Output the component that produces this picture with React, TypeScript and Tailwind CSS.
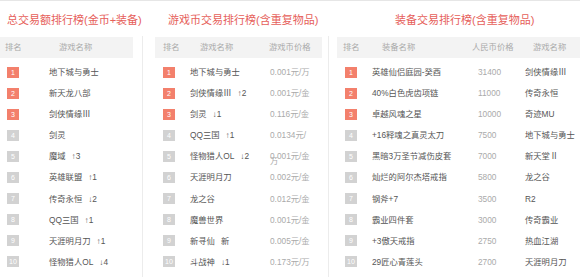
const TOTAL = [
  { name: "地下城与勇士", change: "" },
  { name: "新天龙八部", change: "" },
  { name: "剑侠情缘Ⅲ", change: "" },
  { name: "剑灵", change: "" },
  { name: "魔域", change: "↑3" },
  { name: "英雄联盟", change: "↑1" },
  { name: "传奇永恒", change: "↓2" },
  { name: "QQ三国", change: "↑1" },
  { name: "天涯明月刀", change: "↑1" },
  { name: "怪物猎人OL", change: "↓4" },
];

const COIN = [
  { name: "地下城与勇士", change: "", price: "0.001元/万" },
  { name: "剑侠情缘Ⅲ", change: "↑2", price: "0.001元/金" },
  { name: "剑灵", change: "↓1", price: "0.116元/金" },
  { name: "QQ三国", change: "↑1", price: "0.0134元/万" },
  { name: "怪物猎人OL", change: "↓2", price: "0.001元/金" },
  { name: "天涯明月刀", change: "", price: "0.002元/金" },
  { name: "龙之谷", change: "", price: "0.012元/金" },
  { name: "魔兽世界", change: "", price: "0.001元/金" },
  { name: "新寻仙", change: "新", price: "0.005元/金" },
  { name: "斗战神", change: "↓1", price: "0.173元/万" },
];

const GEAR = [
  { item: "英雄仙侣庭园-癸酉", price: "31400", game: "剑侠情缘Ⅲ" },
  { item: "40%白色虎齿项链", price: "11000", game: "传奇永恒" },
  { item: "卓越风魂之星", price: "10000", game: "奇迹MU" },
  { item: "+16释魂之真灵太刀", price: "7500", game: "地下城与勇士" },
  { item: "黑暗3万圣节减伤皮套", price: "7000", game: "新天堂Ⅱ" },
  { item: "灿烂的阿尔杰塔戒指", price: "5800", game: "龙之谷" },
  { item: "钢斧+7", price: "3500", game: "R2" },
  { item: "霸业四件套", price: "3000", game: "传奇霸业" },
  { item: "+3傲天戒指", price: "2750", game: "热血江湖" },
  { item: "29匠心青莲头", price: "2700", game: "天涯明月刀" },
];

function Rank({ n }: { n: number }) {
  return (
    <div className="flex h-[26px] items-center">
      <span
        className={`block h-[11px] w-[12px] text-center text-[7px] leading-[11px] text-white ${
          n <= 3 ? "bg-[#f3806c]" : "bg-[#d2d2d2]"
        }`}
      >
        {n}
      </span>
    </div>
  );
}

function Name({ name, change }: { name: string; change: string }) {
  return (
    <span className="whitespace-nowrap">
      {name}
      {change && <span className="ml-[6px]">{change}</span>}
    </span>
  );
}

function Title({ text, pad }: { text: string; pad: string }) {
  return (
    <div className={`h-[35px] whitespace-nowrap pt-[11px] text-[11px] leading-[16px] text-[#e6605a] ${pad}`}>
      {text}
    </div>
  );
}

export default function App() {
  return (
    <div className="flex h-[277px] w-[580px] overflow-hidden border-t border-[#e6e6e6] bg-white font-['Liberation_Sans','Noto_Sans_CJK_SC',sans-serif] text-[8.3px] text-[#555]">
      {/* 总交易额 */}
      <div className="w-[143px] shrink-0">
        <Title text="总交易额排行榜(金币+装备)" pad="pl-[7px]" />
        <div className="h-[242px] border-r border-[#ececec] pt-[1px]">
          <div className="flex h-[21px] w-[133px] items-center bg-[#f3f3f3] text-[#aaa]">
            <span className="w-[45px] pl-[5px]">排名</span>
            <span className="pl-[14px]">游戏名称</span>
          </div>
          <div className="pt-[1px]">
            {TOTAL.map((r, i) => (
              <div key={i} className="flex h-[21.1px] items-start leading-[26px]">
                <div className="w-[49px] pl-[7px]">
                  <Rank n={i + 1} />
                </div>
                <Name name={r.name} change={r.change} />
              </div>
            ))}
          </div>
        </div>
      </div>

      {/* 游戏币 */}
      <div className="w-[186px] shrink-0">
        <Title text="游戏币交易排行榜(含重复物品)" pad="pl-[25px]" />
        <div className="h-[242px] border-r border-[#ececec] pl-[12px] pt-[1px]">
          <div className="flex h-[21px] w-[167px] items-center bg-[#f3f3f3] text-[#aaa]">
            <span className="w-[45px] pl-[8px]">排名</span>
            <span className="w-[69px]">游戏名称</span>
            <span>游戏币价格</span>
          </div>
          <div className="pt-[1px]">
            {COIN.map((r, i) => (
              <div key={i} className="flex h-[21.1px] items-start leading-[26px]">
                <div className="w-[35px] pl-[8px]">
                  <Rank n={i + 1} />
                </div>
                <div className="w-[80px]">
                  <Name name={r.name} change={r.change} />
                </div>
                <div className="w-[43px] break-all text-[#aaa]">{r.price}</div>
              </div>
            ))}
          </div>
        </div>
      </div>

      {/* 装备 */}
      <div className="min-w-0 flex-1">
        <Title text="装备交易排行榜(含重复物品)" pad="pl-[66px]" />
        <div className="h-[242px] pl-[8px] pt-[1px]">
          <div className="flex h-[21px] w-[260px] items-center bg-[#f3f3f3] text-[#aaa]">
            <span className="w-[45px] pl-[6px]">排名</span>
            <span className="w-[90px]">装备名称</span>
            <span className="w-[61px]">人民币价格</span>
            <span>游戏名称</span>
          </div>
          <div className="pt-[1px]">
            {GEAR.map((r, i) => (
              <div key={i} className="flex h-[21.1px] items-start whitespace-nowrap leading-[26px]">
                <div className="w-[35px] shrink-0 pl-[8px]">
                  <Rank n={i + 1} />
                </div>
                <div className="w-[106px] shrink-0">{r.item}</div>
                <div className="w-[47px] shrink-0 text-[#aaa]">{r.price}</div>
                <div className="shrink-0">{r.game}</div>
              </div>
            ))}
          </div>
        </div>
      </div>
    </div>
  );
}
